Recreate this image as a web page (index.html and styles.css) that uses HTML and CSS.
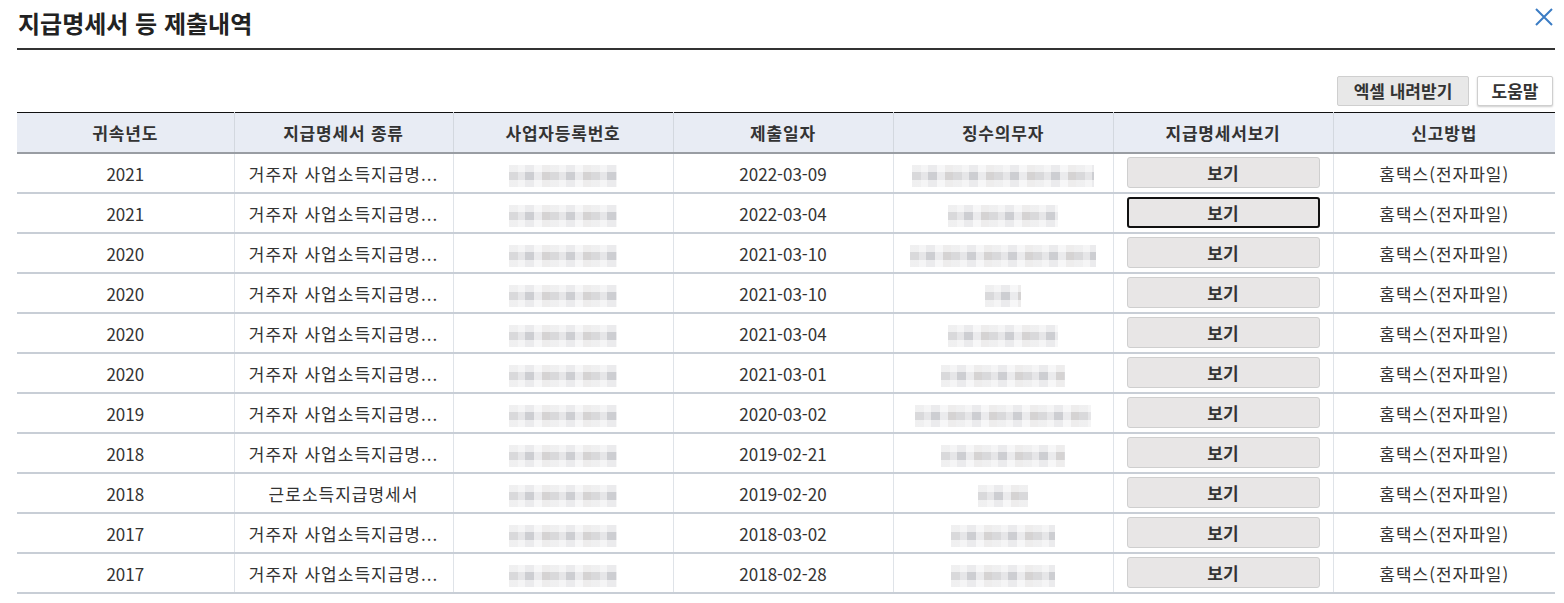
FILE: index.html
```html
<!DOCTYPE html>
<html lang="ko">
<head>
<meta charset="utf-8">
<title>지급명세서 등 제출내역</title>
<link rel="stylesheet" href="styles.css">
</head>
<body>
<div class="dialog">
  <div class="title-bar">
    <h2 class="title">지급명세서 등 제출내역</h2>
    <button class="close" aria-label="닫기">
      <svg width="20" height="20" viewBox="0 0 20 20"><path d="M2 2 L18 18 M18 2 L2 18" stroke="#3b7cc4" stroke-width="2" fill="none"/></svg>
    </button>
  </div>
  <div class="toolbar">
    <button class="tool-btn excel">엑셀 내려받기</button>
    <button class="tool-btn help">도움말</button>
  </div>
  <table class="grid">
    <colgroup>
      <col class="c1"><col class="c2"><col class="c3"><col class="c4"><col class="c5"><col class="c6"><col class="c7">
    </colgroup>
    <thead>
      <tr><th>귀속년도</th><th>지급명세서 종류</th><th>사업자등록번호</th><th>제출일자</th><th>징수의무자</th><th>지급명세서보기</th><th>신고방법</th></tr>
    </thead>
    <tbody>
      <tr><td>2021</td><td class="ko">거주자 사업소득지급명...</td><td><span class="mask" style="width:108px"></span></td><td>2022-03-09</td><td><span class="mask" style="width:182px"></span></td><td><button class="view">보기</button></td><td class="ko">홈택스(전자파일)</td></tr>
      <tr><td>2021</td><td class="ko">거주자 사업소득지급명...</td><td><span class="mask" style="width:108px"></span></td><td>2022-03-04</td><td><span class="mask" style="width:110px"></span></td><td><button class="view focused">보기</button></td><td class="ko">홈택스(전자파일)</td></tr>
      <tr><td>2020</td><td class="ko">거주자 사업소득지급명...</td><td><span class="mask" style="width:108px"></span></td><td>2021-03-10</td><td><span class="mask" style="width:186px"></span></td><td><button class="view">보기</button></td><td class="ko">홈택스(전자파일)</td></tr>
      <tr><td>2020</td><td class="ko">거주자 사업소득지급명...</td><td><span class="mask" style="width:108px"></span></td><td>2021-03-10</td><td><span class="mask" style="width:36px"></span></td><td><button class="view">보기</button></td><td class="ko">홈택스(전자파일)</td></tr>
      <tr><td>2020</td><td class="ko">거주자 사업소득지급명...</td><td><span class="mask" style="width:108px"></span></td><td>2021-03-04</td><td><span class="mask" style="width:110px"></span></td><td><button class="view">보기</button></td><td class="ko">홈택스(전자파일)</td></tr>
      <tr><td>2020</td><td class="ko">거주자 사업소득지급명...</td><td><span class="mask" style="width:108px"></span></td><td>2021-03-01</td><td><span class="mask" style="width:124px"></span></td><td><button class="view">보기</button></td><td class="ko">홈택스(전자파일)</td></tr>
      <tr><td>2019</td><td class="ko">거주자 사업소득지급명...</td><td><span class="mask" style="width:108px"></span></td><td>2020-03-02</td><td><span class="mask" style="width:176px"></span></td><td><button class="view">보기</button></td><td class="ko">홈택스(전자파일)</td></tr>
      <tr><td>2018</td><td class="ko">거주자 사업소득지급명...</td><td><span class="mask" style="width:108px"></span></td><td>2019-02-21</td><td><span class="mask" style="width:124px"></span></td><td><button class="view">보기</button></td><td class="ko">홈택스(전자파일)</td></tr>
      <tr><td>2018</td><td class="ko">근로소득지급명세서</td><td><span class="mask" style="width:108px"></span></td><td>2019-02-20</td><td><span class="mask" style="width:50px"></span></td><td><button class="view">보기</button></td><td class="ko">홈택스(전자파일)</td></tr>
      <tr><td>2017</td><td class="ko">거주자 사업소득지급명...</td><td><span class="mask" style="width:108px"></span></td><td>2018-03-02</td><td><span class="mask" style="width:104px"></span></td><td><button class="view">보기</button></td><td class="ko">홈택스(전자파일)</td></tr>
      <tr><td>2017</td><td class="ko">거주자 사업소득지급명...</td><td><span class="mask" style="width:108px"></span></td><td>2018-02-28</td><td><span class="mask" style="width:104px"></span></td><td><button class="view">보기</button></td><td class="ko">홈택스(전자파일)</td></tr>
    </tbody>
  </table>
</div>
</body>
</html>
```

FILE: styles.css
```css
* { box-sizing: border-box; }
html, body { margin: 0; padding: 0; background: #fff; }
body {
  font-family: "Noto Sans CJK KR", "Noto Sans", "Liberation Sans", sans-serif;
  color: #333;
  font-size: 16px;
}
.dialog {
  position: relative;
  padding: 0 9px 0 17px;
}
.title-bar {
  padding-top: 8px;
  padding-bottom: 10px;
  border-bottom: 2px solid #333;
}
.title {
  margin: 0 0 0 1px;
  font-size: 24px;
  line-height: 30px;
  font-weight: 700;
  color: #222;
}
.close {
  position: absolute;
  top: 7px;
  right: 10px;
  width: 20px;
  height: 20px;
  padding: 0;
  border: 0;
  background: none;
}
.close svg { display: block; }
.toolbar {
  display: flex;
  justify-content: flex-end;
  gap: 8px;
  margin-top: 26px;
  padding-right: 2px;
  margin-bottom: 6px;
}
.tool-btn {
  height: 30px;
  padding: 0;
  font-family: inherit;
  font-size: 17px;
  font-weight: 700;
  color: #333;
  border: 1px solid #cfcfcf;
  border-radius: 2px;
  line-height: 28px;
}
.excel { width: 132px; background: #e8e8e8; }
.help { width: 76px; background: #fff; box-shadow: 0 1px 2px rgba(0,0,0,0.2); }
.grid {
  width: 1538px;
  border-collapse: collapse;
  table-layout: fixed;
  border-top: 1px solid #111;
}
.c1 { width: 217px; }
.c2 { width: 219px; }
.c3, .c4, .c5, .c6 { width: 220px; }
.c7 { width: 222px; }
.grid th {
  height: 40px;
  background: #e8ecf4;
  font-weight: 700;
  font-size: 17px;
  letter-spacing: 0.8px;
  color: #333;
  border-bottom: 2px solid #999da3;
  border-left: 1px solid #d3d8df;
  padding: 0;
  text-align: center;
}
.grid td {
  height: 40px;
  padding: 2px 0 0;
  text-align: center;
  font-size: 17px;
  color: #333;
  border-bottom: 2px solid #c8ced6;
  border-left: 1px solid #dfe3e8;
  vertical-align: middle;
}
.grid td.ko { letter-spacing: 1px; }
.grid th:first-child, .grid td:first-child { border-left: 0; }
.mask {
  display: inline-block;
  height: 22px;
  vertical-align: middle;
  background:
    linear-gradient(180deg, rgba(255,255,255,0.6) 0 7px, rgba(255,255,255,0) 7px 15px, rgba(255,255,255,0.6) 15px),
    repeating-linear-gradient(90deg, #d9d9db 0 9px, #e6e6e8 9px 16px, #cdced2 16px 25px, #ebebed 25px 33px, #d5d3d3 33px 41px);
}
.view {
  display: block;
  margin: -2px auto 0;
  width: 193px;
  height: 31px;
  font-family: inherit;
  font-size: 17px;
  font-weight: 700;
  color: #333;
  background: #e8e6e6;
  border: 1px solid #cfcfcf;
  border-radius: 3px;
  line-height: 29px;
  padding: 0;
}
.view.focused {
  border: 2px solid #111;
  line-height: 27px;
}
```
